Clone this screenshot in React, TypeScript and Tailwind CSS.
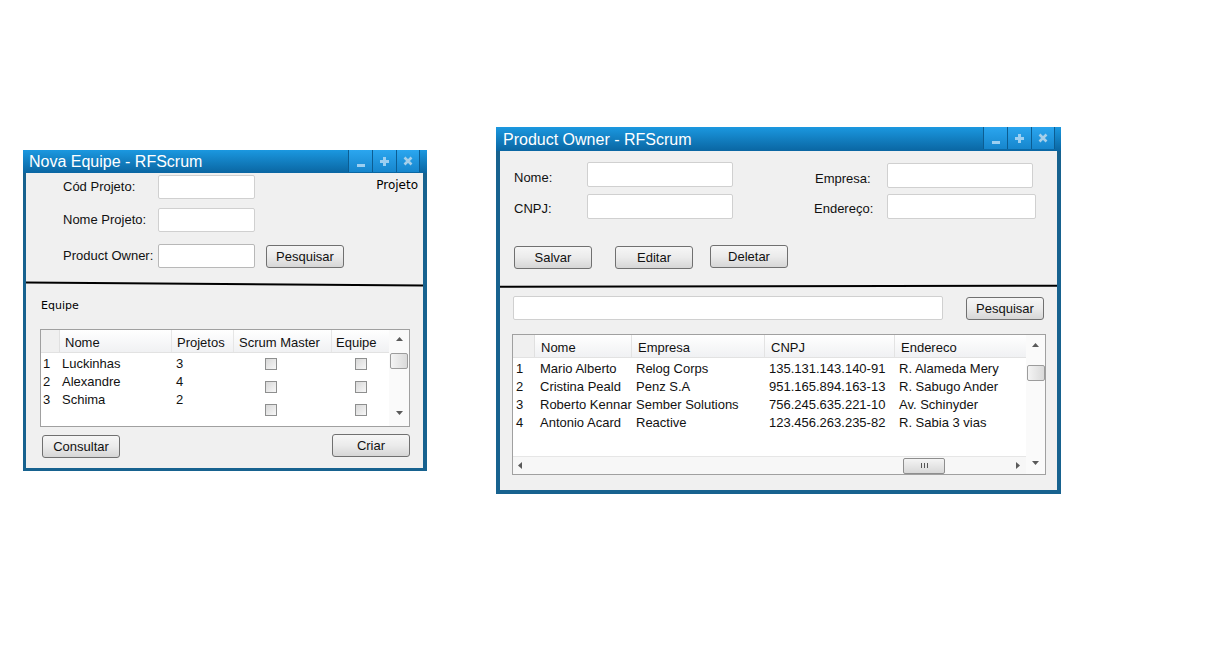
import React from "react";

const SANS = "font-['Liberation_Sans',Arial,sans-serif]";
const HAND = "font-['DejaVu_Sans',sans-serif]";

function TitleButtons() {
  return (
    <div className="flex h-[22px] self-start">
      <div className="flex w-[24px] items-end justify-center border-l border-[#0c5d92] bg-linear-to-b from-[#2ba6ef] to-[#1686cd] pb-[5px]">
        <div className="h-[3px] w-[8px] bg-[#9ccff1]" />
      </div>
      <div className="flex w-[24px] items-center justify-center border-l border-[#0c5d92] bg-linear-to-b from-[#2ba6ef] to-[#1686cd]">
        <svg width="9" height="9" viewBox="0 0 9 9">
          <path d="M3 0h3v3h3v3H6v3H3V6H0V3h3z" fill="#9ccff1" />
        </svg>
      </div>
      <div className="flex w-[24px] items-center justify-center border-l border-r border-[#0c5d92] bg-linear-to-b from-[#2ba6ef] to-[#1686cd]">
        <svg width="10" height="10" viewBox="0 0 10 10">
          <path d="M1.5 1.5l7 7M8.5 1.5l-7 7" stroke="#a6cfe9" strokeWidth="2.6" />
        </svg>
      </div>
    </div>
  );
}

function Btn({ label, className }: { label: string; className: string }) {
  return (
    <button
      className={`flex h-[23px] w-[78px] items-center justify-center rounded-[3px] border border-[#707070] bg-linear-to-b from-[#f6f6f6] via-[#ebebeb] to-[#d6d6d6] pt-[1px] text-[13px] text-[#111] ${className}`}
    >
      {label}
    </button>
  );
}

function UpArrow() {
  return (
    <svg width="7" height="4" viewBox="0 0 7 4">
      <path d="M3.5 0L7 4H0z" fill="#5a5a5a" />
    </svg>
  );
}
function DownArrow() {
  return (
    <svg width="7" height="4" viewBox="0 0 7 4">
      <path d="M0 0h7L3.5 4z" fill="#5a5a5a" />
    </svg>
  );
}
function LeftArrow() {
  return (
    <svg width="4" height="7" viewBox="0 0 4 7">
      <path d="M4 0v7L0 3.5z" fill="#5a5a5a" />
    </svg>
  );
}
function RightArrow() {
  return (
    <svg width="4" height="7" viewBox="0 0 4 7">
      <path d="M0 0v7L4 3.5z" fill="#5a5a5a" />
    </svg>
  );
}

function Check({ className }: { className: string }) {
  return (
    <div
      className={`h-[12px] w-[12px] border border-[#8e8f8f] bg-linear-to-br from-[#d8d8d8] to-[#f7f7f7] ${className}`}
    />
  );
}

const team = [
  { n: "1", name: "Luckinhas", p: "3", off: "mt-[3px]" },
  { n: "2", name: "Alexandre", p: "4", off: "mt-[8px]" },
  { n: "3", name: "Schima", p: "2", off: "mt-[13px]" },
];

const owners = [
  ["1", "Mario Alberto", "Relog Corps", "135.131.143.140-91", "R. Alameda Mery"],
  ["2", "Cristina Peald", "Penz S.A", "951.165.894.163-13", "R. Sabugo Ander"],
  ["3", "Roberto Kennar", "Sember Solutions", "756.245.635.221-10", "Av. Schinyder"],
  ["4", "Antonio Acard", "Reactive", "123.456.263.235-82", "R. Sabia 3 vias"],
];

function NovaEquipe() {
  return (
    <div className="absolute left-[23px] top-[150px] flex h-[321px] w-[404px] flex-col bg-[#17628f]">
      <div className="flex h-[23px] shrink-0 items-center justify-between bg-linear-to-b from-[#1b98e0] to-[#0a66a2] pl-[6px] pr-[7px]">
        <span className="pt-[1px] text-[16px] leading-none text-white">Nova Equipe - RFScrum</span>
        <TitleButtons />
      </div>
      <div className="mb-[3px] ml-[3px] mr-[4px] flex flex-1 flex-col bg-[#f0f0f0] text-[13px] text-[#111]">
        <div className="flex h-[108px] justify-between">
          <div className="flex flex-col pl-[37px]">
            <div className="mt-[2px] flex h-[24px] items-center">
              <span className="w-[95px]">Cód Projeto:</span>
              <div className="h-[24px] w-[97px] rounded-[2px] border border-[#d0d0d0] bg-white" />
            </div>
            <div className="mt-[9px] flex h-[24px] items-center">
              <span className="w-[95px]">Nome Projeto:</span>
              <div className="h-[24px] w-[97px] rounded-[2px] border border-[#d0d0d0] bg-white" />
            </div>
            <div className="mt-[12px] flex h-[24px] items-center">
              <span className="w-[95px]">Product Owner:</span>
              <div className="h-[24px] w-[97px] rounded-[2px] border border-[#b8b8b8] bg-white" />
              <Btn label="Pesquisar" className="ml-[11px]" />
            </div>
          </div>
          <span className={`${HAND} pr-[5px] pt-[5px] text-[12px] leading-[14px] text-black`}>Projeto</span>
        </div>
        <svg className="block h-[6px] w-full" viewBox="0 0 397 6" preserveAspectRatio="none">
          <path d="M0 1.5 L397 4.5" stroke="#000" strokeWidth="2" />
        </svg>
        <span className={`${HAND} ml-[15px] mt-[12px] text-[11px] leading-[14px] text-black`}>Equipe</span>
        <div className="ml-[14px] mt-[16px] flex h-[98px] w-[370px] border border-[#a0a0a0] bg-white">
          <div className="flex flex-1 flex-col">
            <div className="flex h-[23px] border-b border-[#e2e2e2] bg-linear-to-b from-white to-[#f0f1f3]">
              <div className="w-[19px] border-r border-[#e0e0e0] bg-[#f0f0f0]" />
              <div className="flex w-[112px] items-center border-r border-[#e6e6e6] pl-[5px] pt-[3px]">Nome</div>
              <div className="flex w-[62px] items-center border-r border-[#e6e6e6] pl-[5px] pt-[3px]">Projetos</div>
              <div className="flex w-[98px] items-center border-r border-[#e6e6e6] pl-[5px] pt-[3px]">Scrum Master</div>
              <div className="flex w-[57px] items-center pl-[4px] pt-[3px]">Equipe</div>
            </div>
            <div className="mt-[2px] flex flex-col">
              {team.map((r) => (
                <div key={r.n} className="flex h-[18px]">
                  <div className="flex w-[19px] items-center pl-[2px]">{r.n}</div>
                  <div className="flex w-[112px] items-center pl-[2px]">{r.name}</div>
                  <div className="flex w-[62px] items-center pl-[4px]">{r.p}</div>
                  <div className="w-[98px] pl-[31px]">
                    <Check className={r.off} />
                  </div>
                  <div className="w-[57px] pl-[23px]">
                    <Check className={r.off} />
                  </div>
                </div>
              ))}
            </div>
          </div>
          <div className="flex w-[20px] flex-col items-center bg-[#fafafa]">
            <div className="flex h-[17px] items-center">
              <UpArrow />
            </div>
            <div className="mt-[6px] h-[16px] w-[18px] rounded-[2px] border border-[#9c9c9c] bg-linear-to-r from-[#f4f4f4] to-[#dadada]" />
            <div className="flex-1" />
            <div className="flex h-[26px] items-center">
              <DownArrow />
            </div>
          </div>
        </div>
        <div className="mt-[8px] flex justify-between pl-[16px] pr-[13px]">
          <Btn label="Consultar" className="" />
          <Btn label="Criar" className="-mt-[1px]" />
        </div>
      </div>
    </div>
  );
}

function ProductOwner() {
  return (
    <div className="absolute left-[496px] top-[127px] flex h-[367px] w-[565px] flex-col bg-[#17628f]">
      <div className="flex h-[24px] shrink-0 items-center justify-between bg-linear-to-b from-[#1b98e0] to-[#0a66a2] pl-[7px] pr-[6px]">
        <span className="pt-[1px] text-[16px] leading-none text-white">Product Owner - RFScrum</span>
        <TitleButtons />
      </div>
      <div className="mx-[4px] mb-[4px] flex flex-1 flex-col bg-[#f0f0f0] text-[13px] text-[#111]">
        <div className="flex pl-[14px] pt-[11px]">
          <div className="flex flex-col gap-[7px]">
            <div className="flex h-[25px] items-center">
              <span className="mt-[6px] w-[73px]">Nome:</span>
              <div className="h-[25px] w-[146px] rounded-[2px] border border-[#d0d0d0] bg-white" />
            </div>
            <div className="flex h-[25px] items-center">
              <span className="mt-[4px] w-[73px]">CNPJ:</span>
              <div className="h-[25px] w-[146px] rounded-[2px] border border-[#d0d0d0] bg-white" />
            </div>
          </div>
          <div className="ml-[81px] mt-[1px] flex flex-col gap-[6px]">
            <div className="flex h-[25px] items-center">
              <span className="mt-[6px] w-[73px] pl-[1px]">Empresa:</span>
              <div className="h-[25px] w-[146px] rounded-[2px] border border-[#d0d0d0] bg-white" />
            </div>
            <div className="flex h-[25px] items-center">
              <span className="mt-[5px] w-[73px]">Endereço:</span>
              <div className="h-[25px] w-[149px] rounded-[2px] border border-[#d0d0d0] bg-white" />
            </div>
          </div>
        </div>
        <div className="mt-[27px] flex items-start pl-[14px]">
          <Btn label="Salvar" className="" />
          <Btn label="Editar" className="ml-[23px]" />
          <Btn label="Deletar" className="-mt-[1px] ml-[17px]" />
        </div>
        <svg className="mt-[15px] block h-[5px] w-full" viewBox="0 0 557 5" preserveAspectRatio="none">
          <path d="M0 2.8 L557 1.8" stroke="#000" strokeWidth="2" />
        </svg>
        <div className="mt-[7px] flex items-start pl-[13px]">
          <div className="h-[24px] w-[430px] rounded-[2px] border border-[#d0d0d0] bg-white" />
          <Btn label="Pesquisar" className="ml-[23px] mt-[1px]" />
        </div>
        <div className="ml-[12px] mt-[14px] flex h-[141px] w-[534px] border border-[#a0a0a0] bg-white">
          <div className="flex w-[513px] flex-col">
            <div className="flex h-[23px] border-b border-[#e2e2e2] bg-linear-to-b from-white to-[#f0f1f3]">
              <div className="w-[22px] border-r border-[#e0e0e0] bg-[#f0f0f0]" />
              <div className="flex w-[97px] items-center border-r border-[#e3e3e3] pl-[6px] pt-[3px]">Nome</div>
              <div className="flex w-[133px] items-center border-r border-[#e3e3e3] pl-[6px] pt-[3px]">Empresa</div>
              <div className="flex w-[130px] items-center border-r border-[#e3e3e3] pl-[6px] pt-[3px]">CNPJ</div>
              <div className="flex w-[131px] items-center pl-[6px] pt-[3px]">Endereco</div>
            </div>
            <div className="mt-[2px] flex flex-col">
              {owners.map((r) => (
                <div key={r[0]} className="flex h-[18px] items-center whitespace-nowrap">
                  <div className="w-[22px] pl-[3px]">{r[0]}</div>
                  <div className="w-[97px] overflow-hidden pl-[5px]">{r[1]}</div>
                  <div className="w-[133px] pl-[4px]">{r[2]}</div>
                  <div className="w-[130px] pl-[4px]">{r[3]}</div>
                  <div className="w-[131px] pl-[4px]">{r[4]}</div>
                </div>
              ))}
            </div>
            <div className="flex-1" />
            <div className="flex h-[18px] items-center border-t border-[#e6e6e6] bg-[#f7f7f7]">
              <div className="flex w-[14px] justify-center">
                <LeftArrow />
              </div>
              <div className="ml-[376px] flex h-[16px] w-[42px] items-center justify-center gap-[2px] rounded-[2px] border border-[#8e8e8e] bg-linear-to-b from-[#f4f4f4] to-[#d8d8d8]">
                <div className="h-[5px] w-[1px] bg-[#555]" />
                <div className="h-[5px] w-[1px] bg-[#555]" />
                <div className="h-[5px] w-[1px] bg-[#555]" />
              </div>
              <div className="flex-1" />
              <div className="flex w-[16px] justify-center">
                <RightArrow />
              </div>
            </div>
          </div>
          <div className="flex w-[19px] flex-col items-center bg-[#fafafa]">
            <div className="flex h-[20px] items-center">
              <UpArrow />
            </div>
            <div className="mt-[10px] h-[16px] w-[18px] rounded-[2px] border border-[#9c9c9c] bg-linear-to-r from-[#f4f4f4] to-[#dadada]" />
            <div className="flex-1" />
            <div className="flex h-[22px] items-center">
              <DownArrow />
            </div>
          </div>
        </div>
      </div>
    </div>
  );
}

export default function App() {
  return (
    <div className={`${SANS} relative h-[667px] w-[1211px] overflow-hidden bg-white`}>
      <NovaEquipe />
      <ProductOwner />
    </div>
  );
}
